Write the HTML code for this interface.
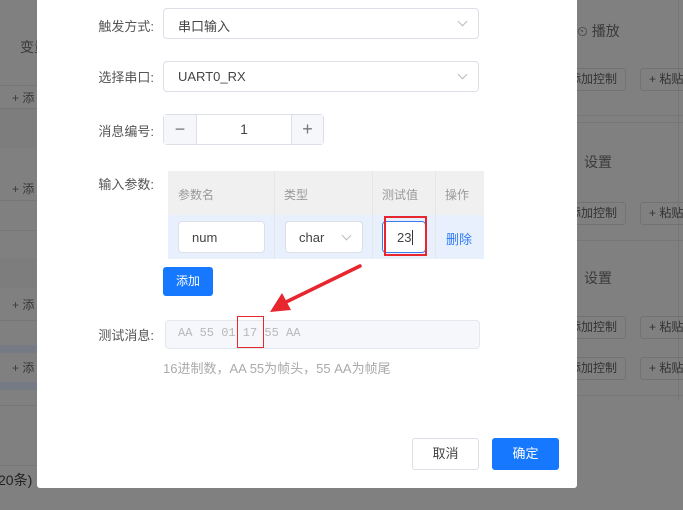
<!DOCTYPE html>
<html><head><meta charset="utf-8"><style>
*{box-sizing:border-box;margin:0;padding:0}
body{width:683px;height:510px;overflow:hidden;background:#808080;position:relative;font-family:"Liberation Sans","Noto Sans CJK SC",sans-serif;font-size:13px;color:#333}
.a{position:absolute}
.bg-t{color:#3a3a3a}
.line{position:absolute;height:1px;background:#767676}
.bbtn{position:absolute;border:1px solid #727272;border-radius:3px;height:23px;color:#333;font-size:12px;line-height:21px;padding-left:8px;white-space:nowrap;overflow:hidden}
.modal{position:absolute;left:37px;top:-6px;width:540px;height:494px;background:#fff;border-radius:3px}
.lbl{position:absolute;left:80px;width:74px;text-align:right;font-size:13px;color:#555;white-space:nowrap}
.sel{position:absolute;border:1px solid #dcdfe6;border-radius:4px;background:#fff;color:#444;font-size:13px}
.chev{position:absolute;width:7px;height:7px;border-right:1px solid #bbb;border-bottom:1px solid #bbb;transform:rotate(45deg)}
</style></head><body>
<div class="a" style="left:0;top:108px;width:37px;height:40px;background:#7d7d7d"></div>
<div class="a" style="left:0;top:258px;width:37px;height:30px;background:#7d7d7d"></div>
<div class="a" style="left:0;top:345px;width:37px;height:8px;background:#767a84"></div>
<div class="a" style="left:0;top:382px;width:37px;height:8px;background:#767a84"></div>
<div class="line" style="left:0;top:85px;width:37px"></div>
<div class="line" style="left:0;top:108px;width:37px"></div>
<div class="line" style="left:0;top:200px;width:37px"></div>
<div class="line" style="left:0;top:230px;width:37px"></div>
<div class="line" style="left:0;top:320px;width:37px"></div>
<div class="line" style="left:0;top:405px;width:37px"></div>
<div class="line" style="left:0;top:465px;width:37px"></div>
<div class="a bg-t" style="left:20px;top:37px;font-size:14px">变量</div>
<div class="a bg-t" style="left:12px;top:89px;font-size:12px">+ 添</div>
<div class="a bg-t" style="left:12px;top:180px;font-size:12px">+ 添</div>
<div class="a bg-t" style="left:12px;top:296px;font-size:12px">+ 添</div>
<div class="a bg-t" style="left:12px;top:359px;font-size:12px">+ 添</div>
<div class="a" style="left:-2px;top:470px;font-size:14px;color:#222">20条)</div>
<div class="line" style="left:577px;top:115px;width:106px"></div>
<div class="line" style="left:577px;top:122px;width:106px"></div>
<div class="line" style="left:577px;top:240px;width:106px"></div>
<div class="line" style="left:577px;top:395px;width:106px"></div>
<div class="a" style="left:678px;top:0;width:1px;height:400px;background:#767676"></div>
<div class="a bg-t" style="left:577px;top:21px;font-size:14px">⏲ 播放</div>
<div class="a bg-t" style="left:584px;top:152px;font-size:14px">设置</div>
<div class="a bg-t" style="left:584px;top:268px;font-size:14px">设置</div>
<div class="bbtn" style="left:560px;top:68px;width:66px">添加控制</div>
<div class="bbtn" style="left:640px;top:68px;width:50px">+ 粘贴</div>
<div class="bbtn" style="left:560px;top:202px;width:66px">添加控制</div>
<div class="bbtn" style="left:640px;top:202px;width:50px">+ 粘贴</div>
<div class="bbtn" style="left:560px;top:316px;width:66px">添加控制</div>
<div class="bbtn" style="left:640px;top:316px;width:50px">+ 粘贴</div>
<div class="bbtn" style="left:560px;top:357px;width:66px">添加控制</div>
<div class="bbtn" style="left:640px;top:357px;width:50px">+ 粘贴</div>

<div class="modal"></div>
<div class="lbl" style="top:16px">触发方式:</div>
<div class="sel" style="left:163px;top:8px;width:316px;height:31px;padding:7px 14px">串口输入</div>
<div class="chev" style="left:459px;top:18px"></div>
<div class="lbl" style="top:67px">选择串口:</div>
<div class="sel" style="left:163px;top:61px;width:316px;height:31px;padding:7px 14px">UART0_RX</div>
<div class="chev" style="left:459px;top:71px"></div>
<div class="lbl" style="top:121px">消息编号:</div>
<div class="sel" style="left:163px;top:114px;width:161px;height:31px"></div>
<div class="a" style="left:164px;top:115px;width:33px;height:29px;background:#f5f7fa;border-right:1px solid #dcdfe6;text-align:center;line-height:28px;font-size:18px;color:#777">−</div>
<div class="a" style="left:291px;top:115px;width:32px;height:29px;background:#f5f7fa;border-left:1px solid #dcdfe6;text-align:center;line-height:28px;font-size:18px;color:#777">+</div>
<div class="a" style="left:197px;top:121px;width:94px;text-align:center;font-size:14px;color:#444">1</div>
<div class="lbl" style="top:174px">输入参数:</div>
<div class="a" style="left:168px;top:171px;width:316px;height:44px;background:#f0f0f0"></div>
<div class="a" style="left:168px;top:215px;width:316px;height:44px;background:#e8f0fe"></div>
<div class="a" style="left:274px;top:171px;width:1px;height:88px;background:#e6e6e6"></div>
<div class="a" style="left:372px;top:171px;width:1px;height:88px;background:#e6e6e6"></div>
<div class="a" style="left:435px;top:171px;width:1px;height:88px;background:#e6e6e6"></div>
<div class="a" style="left:178px;top:186px;font-size:12px;color:#999">参数名</div>
<div class="a" style="left:284px;top:186px;font-size:12px;color:#999">类型</div>
<div class="a" style="left:382px;top:186px;font-size:12px;color:#999">测试值</div>
<div class="a" style="left:445px;top:186px;font-size:12px;color:#999">操作</div>
<div class="sel" style="left:178px;top:221px;width:87px;height:32px;padding:8px 13px;font-size:13px">num</div>
<div class="sel" style="left:285px;top:221px;width:78px;height:32px;padding:8px 13px;font-size:13px">char</div>
<div class="chev" style="left:343px;top:232px"></div>
<div class="sel" style="left:382px;top:221px;width:44px;height:32px;padding:8px 0 0 14px;border-color:#3a7cf0;font-size:13px">23<span style="border-left:1px solid #333;margin-left:1px"></span></div>
<div class="a" style="left:384px;top:216px;width:43px;height:40px;border:2px solid #e8262d"></div>
<div class="a" style="left:446px;top:229px;font-size:13px;color:#2f7bf5">删除</div>
<div class="a" style="left:163px;top:267px;width:50px;height:29px;background:#1677ff;border-radius:3px;color:#fff;font-size:12px;text-align:center;line-height:29px">添加</div>
<svg class="a" style="left:260px;top:260px" width="110" height="60"><line x1="100" y1="6" x2="22" y2="44" stroke="#e8262d" stroke-width="3.5" stroke-linecap="round"/><polygon points="10,52 22,33 31,50" fill="#e8262d"/></svg>
<div class="lbl" style="top:325px">测试消息:</div>
<div class="a" style="left:165px;top:320px;width:315px;height:29px;background:#f5f7fa;border:1px solid #e4e7ed;border-radius:4px"></div>
<div class="a" style="left:178px;top:326px;font-family:'Liberation Mono',monospace;font-size:12px;color:#b8b8b8">AA 55 01 17 55 AA</div>
<div class="a" style="left:237px;top:316px;width:27px;height:32px;border:1px solid #e8262d"></div>
<div class="a" style="left:163px;top:358px;font-size:13px;color:#aaa">16进制数，AA 55为帧头，55 AA为帧尾</div>
<div class="a" style="left:412px;top:438px;width:67px;height:32px;border:1px solid #dcdfe6;border-radius:3px;text-align:center;line-height:30px;font-size:13px;color:#444">取消</div>
<div class="a" style="left:492px;top:438px;width:67px;height:32px;background:#1677ff;border-radius:3px;text-align:center;line-height:32px;font-size:13px;color:#fff">确定</div>
</body></html>
